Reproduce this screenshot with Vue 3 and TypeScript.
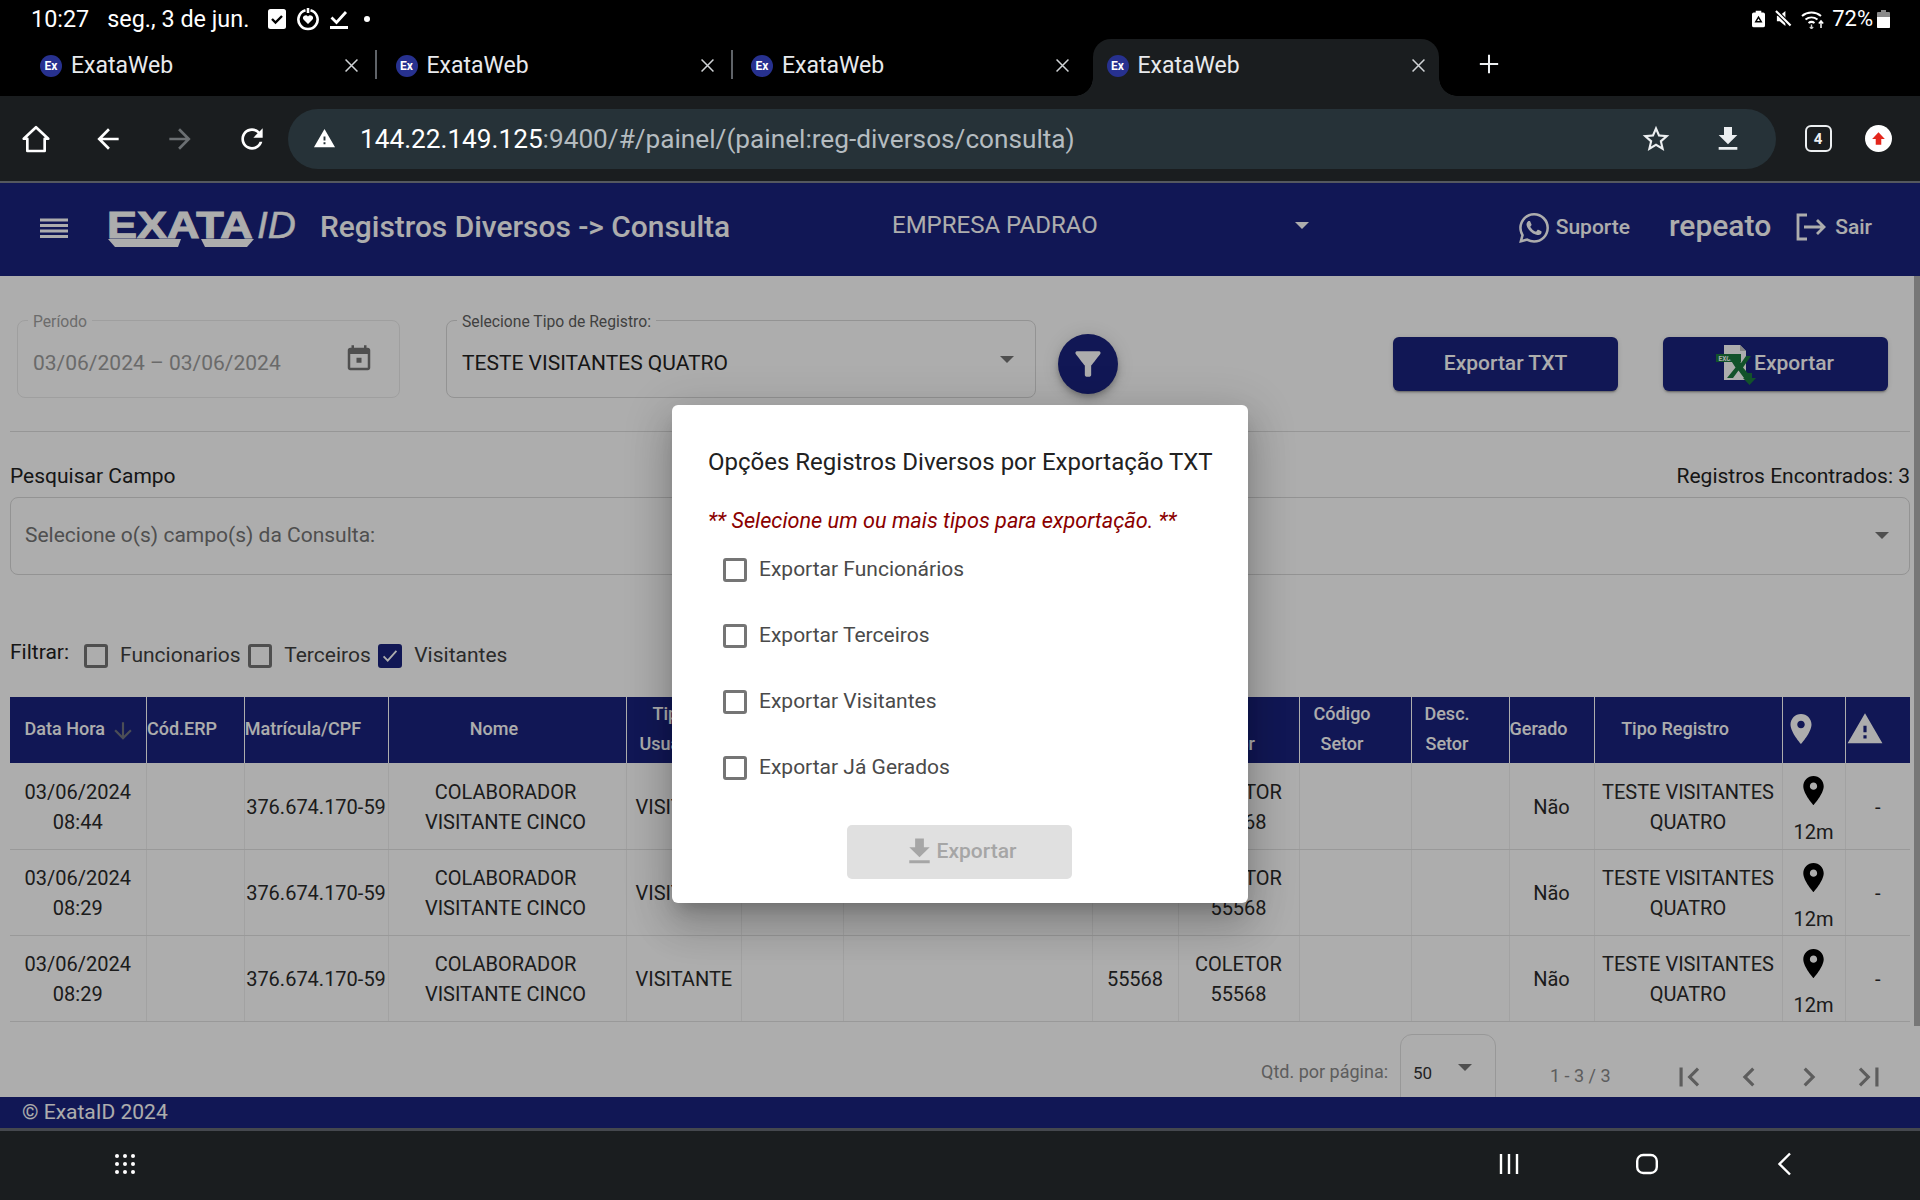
<template>
  <div class="device">
    <div class="statusbar">
      <span class="clock">10:27</span>
      <span class="date">seg., 3 de jun.</span>
      <svg class="st-box" viewBox="0 0 18 20"><rect width="18" height="20" rx="2.500" fill="#fff" /><path d="M4 10l3.500 3.500L14 7" fill="none" stroke="#000" stroke-width="2.400" /></svg>
      <svg class="st-ring" viewBox="0 0 24 24"><path d="M9.500 3.200a9.600 9.600 0 1 0 5 0" fill="none" stroke="#fff" stroke-width="2.600" /><path d="M12 1v5" stroke="#fff" stroke-width="2.600" /><path d="M12 17l-4.500-4.500a2.700 2.700 0 0 1 4.500-3 2.700 2.700 0 0 1 4.500 3z" fill="#fff" /></svg>
      <svg class="st-check" viewBox="0 0 18 20"><path d="M1.500 8.500l5 5L16 3" fill="none" stroke="#fff" stroke-width="2.800" /><path d="M0 18.500h18" stroke="#fff" stroke-width="3" /></svg>
      <span class="st-dot"></span>
      <span class="st-right">
        <svg class="st-small" viewBox="0 0 14 18"><path d="M4 0h6v2h2a2 2 0 0 1 2 2v12a2 2 0 0 1-2 2H2a2 2 0 0 1-2-2V4a2 2 0 0 1 2-2h2z" fill="#fff" /><path d="M7 7l3 5H4z" fill="none" stroke="#000" stroke-width="1.500" /></svg>
        <svg class="st-mute" viewBox="0 0 18 18"><path d="M2 6h3l6-5v16l-6-5H2z" fill="#fff" /><path d="M0 0l18 18" stroke="#000" stroke-width="4.500" /><path d="M1 1l15.500 15.500" stroke="#fff" stroke-width="2.200" /></svg>
        <svg class="st-wifi" viewBox="0 0 25 20"><g fill="none" stroke="#fff" stroke-width="2"><path d="M1 7a15 15 0 0 1 19 0" /><path d="M4.500 10.500a10 10 0 0 1 12 0" /><path d="M7.500 14a5 5 0 0 1 6 0" /></g><path d="M10.500 15.500v4M8.800 17.800l1.700 2 1.700-2" fill="none" stroke="#ccc" stroke-width="1.300" /><path d="M20 19v-7M17.800 14.500l2.200-2.500 2.200 2.500" fill="none" stroke="#fff" stroke-width="1.500" /></svg>
        <span class="pct">72%</span>
        <svg class="st-batt" viewBox="0 0 13 18"><path d="M4 0h5v2h3a1 1 0 0 1 1 1v14a1 1 0 0 1-1 1H1a1 1 0 0 1-1-1V3a1 1 0 0 1 1-1h3z" fill="#8a8a8a" /><path d="M0 7h13v10a1 1 0 0 1-1 1H1a1 1 0 0 1-1-1z" fill="#fff" /></svg>
      </span>
    </div>

    <div class="tabstrip">
      <div v-for="(t, i) in tabs" :key="i" class="tab" :class="{ active: t.active }">
        <span class="favicon">Ex</span>
        <span class="tab-title">{{ t.title }}</span>
        <svg class="tab-close" viewBox="0 0 20 20"><path d="M3 3l14 14M17 3L3 17" stroke="#d0d3d6" stroke-width="1.800" /></svg>
        <span v-if="i < 2" class="tab-sep"></span>
      </div>
      <svg class="tab-plus" viewBox="0 0 24 24"><path d="M12 2v20M2 12h20" stroke="#eceff1" stroke-width="2.200" /></svg>
    </div>

    <div class="toolbar">
      <span class="tb-btn"><svg viewBox="0 0 24 24" class="ic32"><path d="M12 3.200L2.800 11.800h2.700V21h13v-9.200h2.700z" fill="none" stroke="#fff" stroke-width="2" stroke-linejoin="round" /></svg></span>
      <span class="tb-btn"><svg viewBox="0 0 24 24" class="ic32"><path fill="#fff" d="M20 11H7.830l5.590-5.590L12 4l-8 8 8 8 1.410-1.410L7.830 13H20z" /></svg></span>
      <span class="tb-btn"><svg viewBox="0 0 24 24" class="ic32"><path fill="#6b6f72" d="M4 11h12.170l-5.590-5.590L12 4l8 8-8 8-1.410-1.410L16.170 13H4z" /></svg></span>
      <span class="tb-btn"><svg viewBox="0 0 24 24" class="ic32"><path fill="#fff" d="M17.650 6.350C16.200 4.900 14.210 4 12 4c-4.420 0-7.990 3.580-7.990 8s3.570 8 7.990 8c3.730 0 6.840-2.550 7.730-6h-2.080c-.82 2.330-3.040 4-5.650 4-3.310 0-6-2.690-6-6s2.690-6 6-6c1.660 0 3.140.69 4.220 1.780L13 11h7V4l-2.350 2.350z" /></svg></span>
      <div class="omnibox">
        <svg viewBox="0 0 24 24" class="warn-ic"><path fill="#fff" d="M1 21h22L12 2 1 21zm12-3h-2v-2h2v2zm0-4h-2v-4h2v4z" /></svg>
        <span class="url"><span class="url-host">144.22.149.125</span>:9400/#/painel/(painel:reg-diversos/consulta)</span>
        <span class="tb-btn omni-first"><svg viewBox="0 0 24 24" class="ic32"><path fill="#eceff1" d="M22 9.240l-7.190-.62L12 2 9.190 8.630 2 9.240l5.460 4.730L5.820 21 12 17.270 18.180 21l-1.630-7.030L22 9.240zM12 15.400l-3.760 2.270 1-4.280-3.320-2.880 4.380-.38L12 6.100l1.710 4.040 4.380.38-3.320 2.880 1 4.280L12 15.400z" /></svg></span>
        <span class="tb-btn"><svg viewBox="0 0 24 24" class="ic32"><path fill="#eceff1" d="M19 9h-4V3H9v6H5l7 7 7-7zM5 18v2h14v-2H5z" /></svg></span>
      </div>
      <span class="tb-btn small first-sm"><span class="tabcount">4</span></span>
      <span class="tb-btn small"><span class="upd"><svg viewBox="0 0 24 24"><path fill="#e3261c" d="M12 4l8 8.500h-4.500V20h-7v-7.500H4z" /></svg></span></span>
    </div>
    <div class="chrome-line"></div>

    <div class="web">
      <header class="appbar">
        <svg class="burger" viewBox="0 0 28 22"><path d="M0 3h28M0 8.500h28M0 14h28M0 19.500h28" stroke="#fff" stroke-width="2.800" /></svg>
        <div class="logo">
          <span class="logo-text"><span class="logo-a">EXATA</span><span class="logo-id">ID</span></span>
          <svg class="logo-swoosh" viewBox="0 0 146 8"><path fill-rule="evenodd" d="M0 0H146L139 8H7ZM73 0H93L97 8H70Z" fill="#fff" /></svg>
        </div>
        <span class="app-title">Registros Diversos -&gt; Consulta</span>
        <div class="company"><span>EMPRESA PADRAO</span><i class="caret light"></i></div>
        <svg class="wa" viewBox="0 0 24 24"><path fill="#fff" d="M17.472 14.382c-.297-.149-1.758-.867-2.030-.967-.273-.099-.471-.148-.670.150-.197.297-.767.966-.940 1.164-.173.199-.347.223-.644.075-.297-.150-1.255-.463-2.390-1.475-.883-.788-1.480-1.761-1.653-2.059-.173-.297-.018-.458.130-.606.134-.133.298-.347.446-.520.149-.174.198-.298.298-.497.099-.198.050-.371-.025-.520-.075-.149-.669-1.612-.916-2.207-.242-.579-.487-.500-.669-.510-.173-.008-.371-.010-.570-.010-.198 0-.520.074-.792.372-.272.297-1.040 1.016-1.040 2.479 0 1.462 1.065 2.875 1.213 3.074.149.198 2.096 3.200 5.077 4.487.709.306 1.262.489 1.694.625.712.227 1.360.195 1.871.118.571-.085 1.758-.719 2.006-1.413.248-.694.248-1.289.173-1.413-.074-.124-.272-.198-.570-.347m-5.421 7.403h-.004a9.870 9.870 0 01-5.031-1.378l-.361-.214-3.741.982.998-3.648-.235-.374a9.860 9.860 0 01-1.510-5.260c.001-5.450 4.436-9.884 9.888-9.884 2.640 0 5.122 1.030 6.988 2.898a9.825 9.825 0 012.893 6.994c-.003 5.450-4.437 9.884-9.885 9.884m8.413-18.297A11.815 11.815 0 0012.050 0C5.495 0 .160 5.335.157 11.892c0 2.096.547 4.142 1.588 5.945L.057 24l6.305-1.654a11.882 11.882 0 005.683 1.448h.005c6.554 0 11.890-5.335 11.893-11.893a11.821 11.821 0 00-3.480-8.413Z" /></svg>
        <span class="bar-link suporte">Suporte</span>
        <span class="user">repeato</span>
        <svg class="sair-ic" viewBox="0 0 32 28"><path d="M11 2H2v24h9" fill="none" stroke="#fff" stroke-width="2.800" /><path d="M8 14h20M21 7l7 7-7 7" fill="none" stroke="#fff" stroke-width="2.800" /></svg>
        <span class="bar-link sair">Sair</span>
      </header>

      <main class="main">
        <div class="top-row">
          <div class="field disabled periodo">
            <label>Período</label>
            <span class="field-value">03/06/2024 – 03/06/2024</span>
            <svg class="cal" viewBox="0 0 24 24"><path fill="#757575" d="M19 3h-1V1h-2v2H8V1H6v2H5c-1.110 0-1.990.9-1.990 2L3 19c0 1.100.89 2 2 2h14c1.100 0 2-.9 2-2V5c0-1.100-.9-2-2-2zm0 16H5V8h14v11zM10 11h4v4h-4z" /></svg>
          </div>
          <div class="field tipo">
            <label>Selecione Tipo de Registro:</label>
            <span class="field-value dark">TESTE VISITANTES QUATRO</span>
            <i class="caret"></i>
          </div>
          <button class="fab"><svg viewBox="0 0 24 24"><path fill="#fff" d="M4.250 5.610C6.270 8.200 10 13 10 13v6c0 .55.45 1 1 1h2c.55 0 1-.45 1-1v-6s3.720-4.800 5.740-7.390c.51-.66.04-1.610-.79-1.610H5.040c-.83 0-1.300.95-.79 1.610z" /></svg></button>
          <button class="btn-navy txt">Exportar TXT</button>
          <button class="btn-navy xls">
            <svg class="excel" viewBox="0 0 40 40"><path d="M8 0h16l6 6v29H8z" fill="#fff" /><path d="M24 0v6h6z" fill="#c4c4c4" /><rect x="0" y="9" width="25" height="8" fill="#1b7a3e" /><text x="2.500" y="15.500" font-size="6.500" fill="#fff" font-family="Roboto, sans-serif" font-weight="700">EXCEL</text><path d="M12 11h8l5 7 5-7h5l-8 11.500L36 33h-8l-5.500-7.500L17 33h-6l8.500-10.500z" fill="#1b7a3e" /><path d="M31 28h5v5h4l-6.500 7L27 33h4z" fill="#1b7a3e" /></svg>
            <span>Exportar</span>
          </button>
        </div>
        <div class="divider"></div>
        <div class="search-head">
          <span>Pesquisar Campo</span>
          <span>Registros Encontrados: 3</span>
        </div>
        <div class="search-box">
          <span>Selecione o(s) campo(s) da Consulta:</span>
          <i class="caret"></i>
        </div>
        <div class="filter-row">
          <span class="filter-label">Filtrar:</span>
          <span class="cb"></span><span class="cb-text">Funcionarios</span>
          <span class="cb"></span><span class="cb-text">Terceiros</span>
          <span class="cb on"><svg viewBox="0 0 24 24"><path d="M5 12.500l4.500 4.500L19 6.500" fill="none" stroke="#fff" stroke-width="2" /></svg></span><span class="cb-text">Visitantes</span>
        </div>

        <table class="grid">
          <colgroup>
            <col v-for="(w, i) in colWidths" :key="i" :style="{ width: w + 'px' }" />
          </colgroup>
          <thead>
            <tr>
              <th v-for="(h, i) in headers" :key="i">
                <div class="th-in">
                  <span class="th-text" v-html="h"></span>
                  <svg v-if="i === 0" class="sort arrow" viewBox="0 0 24 24"><path fill="#70737f" d="M20 12l-1.410-1.410L13 16.170V4h-2v12.170l-5.580-5.590L4 12l8 8 8-8z" /></svg>
                  <span v-else class="sort"></span>
                </div>
              </th>
              <th>
                <div class="th-in">
                  <svg class="th-pin" viewBox="0 0 24 24"><path fill="#fff" :d="pinPath" /></svg>
                  <span class="sort"></span>
                </div>
              </th>
              <th>
                <div class="th-in">
                  <svg class="th-warn" viewBox="0 0 24 24"><path fill="#fff" d="M1 21h22L12 2 1 21zm12-3h-2v-2h2v2zm0-4h-2v-4h2v4z" /></svg>
                  <span class="sort"></span>
                </div>
              </th>
            </tr>
          </thead>
          <tbody>
            <tr v-for="(r, i) in rows" :key="i">
              <td>{{ r.date }}<br />{{ r.time }}</td>
              <td></td>
              <td>376.674.170-59</td>
              <td class="nome">COLABORADOR<br />VISITANTE CINCO</td>
              <td class="left">VISITANTE</td>
              <td></td>
              <td></td>
              <td>55568</td>
              <td>COLETOR<br />55568</td>
              <td></td>
              <td></td>
              <td>Não</td>
              <td>TESTE VISITANTES<br />QUATRO</td>
              <td class="loc">
                <svg viewBox="0 0 24 24"><path fill="#000" :d="pinPath" /></svg>
                <span>12m</span>
              </td>
              <td>-</td>
            </tr>
          </tbody>
        </table>

        <div class="pager">
          <span class="pg-label">Qtd. por página:</span>
          <div class="pg-select"><span>50</span><i class="caret"></i></div>
          <span class="pg-range">1 - 3 / 3</span>
          <svg v-for="(p, i) in pagerIcons" :key="i" class="pg-ic" viewBox="0 0 24 24"><path fill="#8a8a8a" :d="p" /></svg>
        </div>
        <div class="scroll-thumb"></div>
      </main>

      <footer class="footer">© ExataID 2024</footer>

      <div class="backdrop">
        <div class="dialog">
          <h2>Opções Registros Diversos por Exportação TXT</h2>
          <p class="warn-text">** Selecione um ou mais tipos para exportação. **</p>
          <div v-for="o in options" :key="o" class="opt">
            <span class="cb"></span>
            <span>{{ o }}</span>
          </div>
          <div class="dlg-actions">
            <button class="btn-disabled">
              <svg viewBox="0 0 24 24"><path fill="#a6a6a6" d="M19 9h-4V3H9v6H5l7 7 7-7zM5 18v2h14v-2H5z" /></svg>
              <span>Exportar</span>
            </button>
          </div>
        </div>
      </div>
    </div>

    <div class="navbar">
      <svg class="nav-apps" viewBox="0 0 24 24"><g fill="#fff"><circle v-for="d in dots" :key="d[0] + '-' + d[1]" :cx="d[0]" :cy="d[1]" r="2" /></g></svg>
      <span class="nav-right">
        <svg class="nav-ic" viewBox="0 0 24 24"><path d="M4 2v20M12 2v20M20 2v20" stroke="#fff" stroke-width="2.400" /></svg>
        <svg class="nav-ic" viewBox="0 0 24 24"><rect x="2.200" y="3" width="19.600" height="18" rx="6" fill="none" stroke="#fff" stroke-width="2.400" /></svg>
        <svg class="nav-ic" viewBox="0 0 24 24"><path d="M17 1.500L6.500 12 17 22.500" fill="none" stroke="#fff" stroke-width="2.400" /></svg>
      </span>
    </div>
  </div>
</template>

<script setup lang="ts">
const tabs = [
  { title: 'ExataWeb', active: false },
  { title: 'ExataWeb', active: false },
  { title: 'ExataWeb', active: false },
  { title: 'ExataWeb', active: true },
]

const colWidths = [136, 98, 144, 238, 115, 102, 249, 86, 121, 112, 98, 85, 188, 63, 65]

const headers = [
  'Data Hora',
  'Cód.ERP',
  'Matrícula/CPF',
  'Nome',
  'Tipo<br>Usuário',
  '',
  '',
  '',
  'Desc.<br>Coletor',
  'Código<br>Setor',
  'Desc.<br>Setor',
  'Gerado',
  'Tipo Registro',
]

const rows = [
  { date: '03/06/2024', time: '08:44' },
  { date: '03/06/2024', time: '08:29' },
  { date: '03/06/2024', time: '08:29' },
]

const options = [
  'Exportar Funcionários',
  'Exportar Terceiros',
  'Exportar Visitantes',
  'Exportar Já Gerados',
]

const pinPath =
  'M12 2C8.130 2 5 5.130 5 9c0 5.250 7 13 7 13s7-7.750 7-13c0-3.870-3.130-7-7-7zm0 9.500c-1.380 0-2.500-1.120-2.500-2.500s1.120-2.500 2.500-2.500 2.500 1.120 2.500 2.500-1.120 2.500-2.500 2.500z'

const pagerIcons = [
  'M18.410 16.590L13.820 12l4.590-4.590L17 6l-6 6 6 6zM6 6h2v12H6z',
  'M15.410 7.410L14 6l-6 6 6 6 1.410-1.410L10.830 12z',
  'M10 6L8.590 7.410 13.170 12l-4.580 4.590L10 18l6-6z',
  'M5.590 7.410L10.180 12l-4.590 4.590L7 18l6-6-6-6zM16 6h2v12h-2z',
]

const dots: number[][] = []
for (const y of [4, 12, 20]) {
  for (const x of [4, 12, 20]) dots.push([x, y])
}
</script>

<style>
html,
body {
  margin: 0;
  background: #000;
  overflow: hidden;
}
</style>

<style scoped>
* {
  box-sizing: border-box;
}

.device {
  width: 1920px;
  height: 1200px;
  display: flex;
  flex-direction: column;
  font-family: Roboto, sans-serif;
  color: #212121;
  background: #000;
}

/* status bar */
.statusbar {
  height: 39px;
  background: #000;
  color: #fff;
  display: flex;
  align-items: center;
  padding: 0 0 2px 31px;
  font-size: 23.400px;
}

.date {
  margin-left: 18px;
  width: 142px;
  white-space: nowrap;
}

.st-box {
  width: 18px;
  height: 20px;
  margin-left: 19px;
}

.st-ring {
  width: 24px;
  height: 24px;
  margin-left: 10px;
}

.st-check {
  width: 18px;
  height: 20px;
  margin-left: 10px;
}

.st-dot {
  width: 6px;
  height: 6px;
  border-radius: 50%;
  background: #fff;
  margin-left: 16px;
}

.st-right {
  margin-left: auto;
  margin-right: 30px;
  display: flex;
  align-items: center;
}

.st-small {
  width: 13px;
  height: 18px;
}

.st-mute {
  width: 17px;
  height: 17px;
  margin-left: 10px;
}

.st-wifi {
  width: 25px;
  height: 20px;
  margin-left: 9px;
}

.pct {
  margin-left: 6px;
  font-size: 22px;
}

.st-batt {
  width: 13px;
  height: 18px;
  margin-left: 4px;
}

/* tabs */
.tabstrip {
  height: 57px;
  background: #000;
  display: flex;
  padding-left: 26px;
  gap: 9.500px;
  position: relative;
}

.tab {
  width: 346px;
  height: 57px;
  display: flex;
  align-items: center;
  padding: 0 9px 4px 14px;
  color: #e8eaed;
  font-size: 23px;
  position: relative;
}

.tab.active {
  background: #1a1d1f;
  border-radius: 18px 18px 0 0;
}

.tab.active::before,
.tab.active::after {
  content: '';
  position: absolute;
  bottom: 0;
  width: 18px;
  height: 18px;
}

.tab.active::before {
  left: -18px;
  background: radial-gradient(circle at 0 0, #000 17.500px, #1a1d1f 18px);
}

.tab.active::after {
  right: -18px;
  background: radial-gradient(circle at 100% 0, #000 17.500px, #1a1d1f 18px);
}

.favicon {
  width: 22px;
  height: 22px;
  border-radius: 50%;
  background: #27318f;
  color: #fff;
  font-size: 12px;
  font-weight: 700;
  display: flex;
  align-items: center;
  justify-content: center;
  margin-right: 9px;
}

.tab-close {
  width: 17px;
  height: 17px;
  margin-left: auto;
  margin-right: 3px;
}

.tab-sep {
  position: absolute;
  left: 349px;
  top: 11px;
  width: 2px;
  height: 29px;
  background: #5f6368;
}

.tab-plus {
  width: 22px;
  height: 22px;
  margin: 14px 0 0 30px;
}

/* toolbar */
.toolbar {
  height: 85px;
  background: #1a1d1f;
  display: flex;
  align-items: center;
}

.chrome-line {
  height: 2px;
  background: #55585e;
}

.tb-btn {
  width: 72px;
  display: flex;
  align-items: center;
  justify-content: center;
  flex: none;
}

.tb-btn.small {
  width: 60px;
}

.tb-btn.first-sm {
  margin-left: 12px;
}

.ic32 {
  width: 32px;
  height: 32px;
}

.omnibox {
  width: 1488px;
  height: 60px;
  background: #263238;
  border-radius: 30px;
  display: flex;
  align-items: center;
  padding: 0 12px 0 25px;
  color: #b5bcc0;
  font-size: 26.200px;
}

.warn-ic {
  width: 23px;
  height: 23px;
}

.url {
  margin-left: 24px;
  white-space: nowrap;
}

.url-host {
  color: #fff;
}

.omni-first {
  margin-left: auto;
}

.tabcount {
  width: 27px;
  height: 27px;
  border: 2.500px solid #eceff1;
  border-radius: 6px;
  color: #eceff1;
  font-size: 15px;
  font-weight: 700;
  display: flex;
  align-items: center;
  justify-content: center;
}

.upd {
  width: 27px;
  height: 27px;
  border-radius: 50%;
  background: #fff;
  display: flex;
  align-items: center;
  justify-content: center;
}

.upd svg {
  width: 19px;
  height: 19px;
}

/* web page */
.web {
  flex: 1;
  min-height: 0;
  display: flex;
  flex-direction: column;
  position: relative;
}

.appbar {
  height: 93px;
  flex: none;
  background: #1a237e;
  color: #fff;
  display: flex;
  align-items: center;
  padding: 0 0 5px 40px;
}

.burger {
  width: 28px;
  height: 22px;
  margin-top: 2px;
}

.logo {
  margin-left: 39px;
  width: 190px;
  height: 38px;
  position: relative;
  margin-top: 5px;
}

.logo-text {
  display: flex;
  align-items: baseline;
  line-height: 32px;
  margin-top: -1px;
}

.logo-a {
  font-family: 'Liberation Sans', sans-serif;
  font-weight: 700;
  font-size: 36px;
  -webkit-text-stroke: 1px #fff;
  transform: scaleX(1.250);
  transform-origin: left;
  width: 150px;
}

.logo-id {
  font-family: 'Liberation Sans', sans-serif;
  font-style: italic;
  font-size: 36px;
  -webkit-text-stroke: 0.400px #fff;
  transform: scaleX(1.080);
  transform-origin: left;
}

.logo-swoosh {
  position: absolute;
  left: 1px;
  top: 28px;
  width: 146px;
  height: 8px;
}

.app-title {
  margin: 0 0 2px 23px;
  font-size: 29.900px;
  font-weight: 500;
  white-space: nowrap;
}

.company {
  position: absolute;
  left: 892px;
  top: 0;
  width: 417px;
  height: 83px;
  display: flex;
  align-items: center;
  justify-content: space-between;
  font-size: 24px;
  color: #fff;
}

.wa {
  width: 30px;
  height: 30px;
  margin-left: auto;
  margin-top: 2px;
}

.bar-link {
  font-size: 21px;
  font-weight: 500;
}

.suporte {
  margin-left: 7px;
}

.user {
  margin-left: 39px;
  font-size: 30px;
  font-weight: 500;
  margin-bottom: 4px;
}

.sair-ic {
  width: 32px;
  height: 28px;
  margin-left: 25px;
}

.sair {
  margin-left: 7px;
  margin-right: 48px;
}

.main {
  flex: 1;
  min-height: 0;
  background: #fff;
  padding: 45px 10px 0;
  position: relative;
  overflow: hidden;
  font-size: 21px;
}

.top-row {
  display: flex;
  align-items: flex-start;
  height: 76px;
}

.field {
  height: 78px;
  margin-top: -1px;
  border: 1px solid #d9d9d9;
  border-radius: 8px;
  position: relative;
  display: flex;
  align-items: center;
  flex: none;
}

.field label {
  position: absolute;
  left: 10px;
  top: -9px;
  padding: 0 5px;
  background: #fff;
  font-size: 15.700px;
  line-height: 20px;
  color: #5f5f5f;
}

.field.disabled {
  border-color: #ebebeb;
}

.field.disabled label {
  color: #a0a0a0;
}

.field-value {
  padding-left: 15px;
  margin-top: 8px;
  font-size: 21px;
  color: #9c9c9c;
  white-space: nowrap;
}

.field-value.dark {
  color: #212121;
}

.periodo {
  width: 383px;
  margin-left: 7px;
}

.cal {
  position: absolute;
  left: 326px;
  top: 21px;
  width: 30px;
  height: 34px;
}

.tipo {
  width: 590px;
  margin-left: 46px;
}

.caret {
  display: block;
  width: 0;
  height: 0;
  border-left: 7px solid transparent;
  border-right: 7px solid transparent;
  border-top: 7px solid #757575;
}

.caret.light {
  border-top-color: #fff;
  margin-bottom: -2px;
}

.tipo .caret {
  margin-left: auto;
  margin-right: 21px;
  margin-bottom: 0;
}

.fab {
  width: 60px;
  height: 60px;
  margin: 13px 0 0 22px;
  border: 0;
  border-radius: 50%;
  background: #1a237e;
  display: flex;
  align-items: center;
  justify-content: center;
  box-shadow: 0 3px 5px -1px rgba(0, 0, 0, 0.2), 0 6px 10px 0 rgba(0, 0, 0, 0.14), 0 1px 18px 0 rgba(0, 0, 0, 0.12);
  flex: none;
}

.fab svg {
  width: 38px;
  height: 38px;
}

.btn-navy {
  width: 225px;
  height: 54px;
  margin-top: 16px;
  border: 0;
  border-radius: 6px;
  background: #1a237e;
  color: #fff;
  font: 500 21px/50px Roboto, sans-serif;
  display: flex;
  align-items: center;
  justify-content: center;
  box-shadow: 0 3px 1px -2px rgba(0, 0, 0, 0.2), 0 2px 2px 0 rgba(0, 0, 0, 0.14), 0 1px 5px 0 rgba(0, 0, 0, 0.12);
  flex: none;
  padding: 0 0 2px;
}

.btn-navy.txt {
  margin-left: 275px;
}

.btn-navy.xls {
  margin-left: 45px;
}

.excel {
  width: 40px;
  height: 40px;
  margin: 4px -2px 0 -1px;
}

.divider {
  height: 1px;
  background: #dedede;
  margin-top: 34px;
}

.search-head {
  display: flex;
  justify-content: space-between;
  margin-top: 31px;
  line-height: 26px;
}

.search-box {
  height: 78px;
  margin-top: 8px;
  border: 1px solid #d9d9d9;
  border-radius: 8px;
  display: flex;
  align-items: center;
  justify-content: space-between;
  padding: 0 20px 2px 14px;
  color: #757575;
}

.filter-row {
  height: 30px;
  margin-top: 65px;
  display: flex;
  align-items: center;
}

.filter-label {
  margin: -6px 14px 0 0;
  width: 60px;
}

.cb {
  width: 24px;
  height: 24px;
  border: 3px solid #757575;
  border-radius: 3px;
  display: block;
  flex: none;
  margin-top: 1px;
}

.cb.on {
  background: #1a237e;
  border-color: #1a237e;
  display: flex;
  align-items: center;
  justify-content: center;
}

.cb.on svg {
  width: 22px;
  height: 22px;
  flex: none;
}

.cb-text {
  margin: 0 7.500px 0 12px;
  color: #3f3f3f;
}

.grid {
  margin-top: 27px;
  width: 1900px;
  table-layout: fixed;
  border-collapse: collapse;
  font-size: 20px;
  line-height: 30px;
  color: #2a2a2a;
}

.grid th {
  height: 66px;
  padding: 0;
  background: #1a237e;
  color: #fff;
  font-size: 18px;
  font-weight: 500;
  line-height: 30px;
  border-right: 1px solid #fff;
}

.grid th:last-child {
  border-right: 0;
}

.th-in {
  display: flex;
  align-items: center;
  justify-content: center;
  margin-top: -2px;
}

.th-text {
  text-align: center;
  white-space: nowrap;
}

.sort {
  width: 26px;
  height: 22px;
  flex: none;
  display: block;
}

.sort.arrow {
  height: 26px;
  transform: translateX(5px);
  margin-top: 4px;
}

.th-pin {
  width: 36px;
  height: 36px;
}

.th-warn {
  width: 38px;
  height: 38px;
}

.grid td {
  height: 86px;
  padding: 2px 0 0;
  text-align: center;
  white-space: nowrap;
  border-right: 1px solid #efefef;
  border-bottom: 1px solid #e2e2e2;
}

.grid td:last-child {
  border-right: 0;
}

.grid td.left {
  text-align: left;
  padding-left: 9px;
}

.grid td.nome {
  padding-right: 3px;
}

.grid td.loc {
  padding: 0;
}

.loc svg {
  display: block;
  width: 35px;
  height: 35px;
  margin: 6px auto 12px;
}

.loc span {
  display: block;
  line-height: 24px;
}

.pager {
  height: 64px;
  margin-top: 12px;
  padding-left: 1251px;
  display: flex;
  align-items: flex-start;
  color: #8a8a8a;
  font-size: 18px;
}

.pg-label {
  margin-top: 27px;
  width: 139px;
}

.pg-select {
  width: 96px;
  height: 70px;
  border: 1px solid #e0e0e0;
  border-radius: 12px 12px 0 0;
  display: flex;
  padding: 27px 0 0 12px;
  color: #333;
  font-size: 17px;
  line-height: 22px;
}

.pg-select .caret {
  margin: 2px 0 0 26px;
}

.pg-range {
  margin: 31px 59px 0 54px;
  width: 61px;
  white-space: nowrap;
}

.pg-ic {
  width: 38px;
  height: 38px;
  margin: 24px 22px 0 0;
  flex: none;
}

.scroll-thumb {
  position: absolute;
  right: 0;
  top: 0;
  width: 6px;
  height: 750px;
  background: #b0b0b0;
}

.footer {
  height: 31px;
  flex: none;
  background: #1a237e;
  color: #fff;
  font-size: 21px;
  line-height: 30px;
  padding-left: 22px;
}

.backdrop {
  position: absolute;
  inset: 0;
  background: rgba(0, 0, 0, 0.32);
  display: flex;
  justify-content: center;
  align-items: flex-start;
}

.dialog {
  width: 576px;
  height: 498px;
  margin-top: 222px;
  background: #fff;
  border-radius: 6px;
  padding: 40px 36px 0;
  box-shadow: 0 11px 15px -7px rgba(0, 0, 0, 0.2), 0 24px 38px 3px rgba(0, 0, 0, 0.14), 0 9px 46px 8px rgba(0, 0, 0, 0.12);
}

.dialog h2 {
  margin: 0;
  font-size: 24px;
  font-weight: 400;
  line-height: 34px;
  white-space: nowrap;
  color: #212121;
}

.warn-text {
  margin: 27px 0 0;
  font-size: 21.700px;
  font-style: italic;
  line-height: 30px;
  color: #8b0000;
  white-space: nowrap;
}

.opt {
  height: 66px;
  display: flex;
  align-items: center;
  padding-left: 15px;
  gap: 12px;
  font-size: 21px;
  color: #4a4a4a;
}

.opt .cb {
  margin-top: 1px;
}

.dlg-actions {
  display: flex;
  justify-content: center;
  padding-right: 2px;
}

.btn-disabled {
  width: 225px;
  height: 54px;
  margin-top: 25px;
  border: 0;
  border-radius: 5px;
  background: #e0e0e0;
  color: #a6a6a6;
  font: 500 21px Roboto, sans-serif;
  display: flex;
  align-items: center;
  justify-content: center;
  padding: 0 0 2px;
}

.btn-disabled svg {
  width: 35px;
  height: 35px;
}

/* android nav */
.navbar {
  height: 72px;
  flex: none;
  background: #1a1d1f;
  border-top: 3px solid #45484e;
  display: flex;
  align-items: center;
  padding: 0 0 4px 113px;
}

.nav-apps {
  width: 24px;
  height: 24px;
}

.nav-right {
  margin-left: auto;
  margin-right: 123px;
  display: flex;
  gap: 114px;
}

.nav-ic {
  width: 24px;
  height: 24px;
}
</style>
